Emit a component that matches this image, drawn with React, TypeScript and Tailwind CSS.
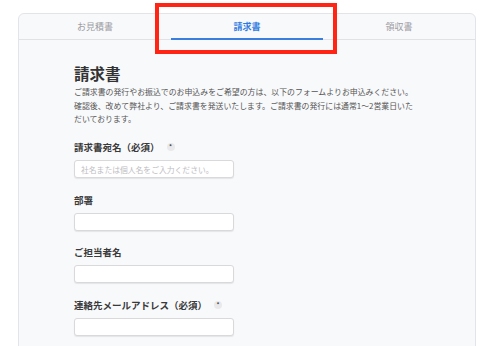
import React from 'react';

const tabs = ['お見積書', '請求書', '領収書'];

const RequiredMark: React.FC = () => (
  <span className="ml-[7px] inline-flex h-[8px] w-[8px] items-center justify-center rounded-full bg-[#e9e9ec] text-[6px] leading-none text-[#444]">
    *
  </span>
);

const Field: React.FC<{ label: string; required?: boolean; placeholder?: string; first?: boolean }> = ({
  label,
  required,
  placeholder,
  first,
}) => (
  <div className={first ? 'mt-[14.5px]' : 'mt-[14.5px]'}>
    <div className="flex h-[14px] items-center text-[9.5px] font-bold leading-[14px] text-[#3a3a3a]">
      <span>{label}</span>
      {required && <RequiredMark />}
    </div>
    <input
      type="text"
      placeholder={placeholder}
      className="mt-[6px] block h-[18px] w-[160px] rounded-[3px] border border-[#d9d9dc] bg-white px-[6px] text-[7.8px] text-[#333] shadow-[0_1px_1px_rgba(0,0,0,0.08)] outline-none placeholder:text-[#bdbdc2]"
    />
  </div>
);

export default function App() {
  return (
    <div className="relative h-[346px] w-[491px] overflow-hidden bg-white pl-[18px] pt-[13px] font-['Noto_Sans_CJK_JP',sans-serif]">
      <div className="h-[360px] w-[458px] rounded-t-[6px] border border-[#e3e4e8] bg-[#f8f9fb]">
        {/* tabs */}
        <div className="flex h-[26px] border-b border-[#e1e2e6]">
          {tabs.map((t, i) => (
            <div
              key={t}
              className={`relative flex flex-1 items-center justify-center text-[9px] ${
                i === 1 ? 'font-bold text-[#2f7be0]' : 'text-[#9c9ca2]'
              }`}
            >
              {t}
              {i === 1 && <span className="absolute bottom-[-1px] left-0 right-0 h-[2px] bg-[#3a7fdd]" />}
            </div>
          ))}
        </div>

        <div className="pl-[55px] pt-[22px]">
          <h1 className="text-[15.5px] font-bold leading-[22px] text-[#333]">請求書</h1>
          <p className="mt-[1px] w-[346px] text-[7.9px] leading-[13.5px] text-[#555]">
            ご請求書の発行やお振込でのお申込みをご希望の方は、以下のフォームよりお申込みください。確認後、改めて弊社より、ご請求書を発送いたします。ご請求書の発行には通常1〜2営業日いただいております。
          </p>

          <Field first label="請求書宛名（必須）" required placeholder="社名または個人名をご入力ください。" />
          <Field label="部署" />
          <Field label="ご担当者名" />
          <Field label="連絡先メールアドレス（必須）" required />
        </div>
      </div>

      {/* red highlight annotation */}
      <div className="absolute left-[155px] top-[3px] h-[51px] w-[182px] border-[4px] border-[#ff2414]" />
    </div>
  );
}
